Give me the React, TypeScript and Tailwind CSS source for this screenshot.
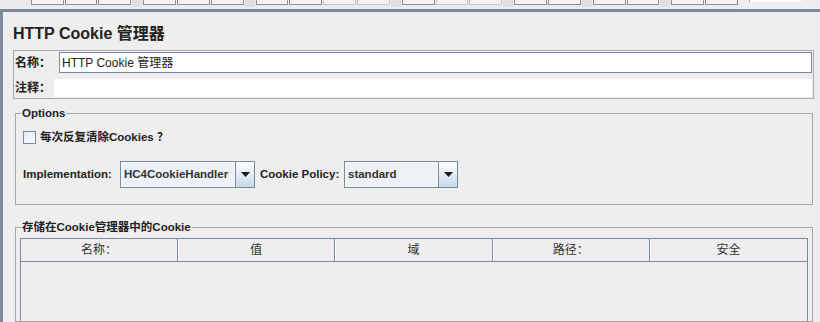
import React from 'react';

const FONT = "font-['Liberation_Sans','Noto_Sans_CJK_SC',sans-serif]";

// toolbar strip: b = active button, d = disabled button, s = separator
const TOOLBAR = 'bbbsbbbsbbddsbddsbbsbbsbb'.split('');

function Toolbar() {
  return (
    <div className="flex h-[9px]">
      <div className="flex h-full w-[739px] bg-[#ebebeb]">
        <div className="w-[31px]" />
        {TOOLBAR.map((t, i) =>
          t === 's' ? (
            <div key={i} className="mr-[1px] h-[7px] w-[10px] bg-[#dedee3]" />
          ) : (
            <div
              key={i}
              className={`mr-[1px] h-[5px] w-[33px] border-x border-b bg-[#f2f2f2] ${
                t === 'b' ? 'border-[#8e8e8e]' : 'border-[#c6c6c6]'
              }`}
            />
          )
        )}
      </div>
      <div className="flex-1 bg-[#eeeeee] pl-[10px]">
        <div className="h-[2px] w-[52px] border-l border-[#a0a0a0] bg-white" />
      </div>
    </div>
  );
}

function Combo({ value, className }: { value: string; className: string }) {
  return (
    <div className={`flex h-[27px] border border-[#7a8a9c] bg-[#eef1f6] ${className}`}>
      <div className="flex flex-1 items-center border border-[#f8faff] pl-[2px] text-[11.5px] font-bold text-[#333]">
        {value}
      </div>
      <div className="flex w-[19px] items-center justify-center border-l border-[#7a8a9c] bg-gradient-to-b from-white to-[#c8d8ec]">
        <svg width="9" height="5" viewBox="0 0 9 5">
          <path d="M0 0h9L4.5 5z" fill="#1a1a1a" />
        </svg>
      </div>
    </div>
  );
}

const COLUMNS = ['名称：', '值', '域', '路径：', '安全'];

export default function App() {
  return (
    <div className={`flex h-[322px] w-[820px] flex-col overflow-hidden bg-[#eeeeee] text-[#333] ${FONT}`}>
      <Toolbar />
      <div className="h-[3px] bg-[#7d8a9b]" />
      <div className="flex flex-1">
        <div className="w-[3px] bg-[#7d8a9b]" />
        <div className="flex flex-1 flex-col">
          <div className="ml-[10px] mt-[12px] h-[20px] text-[16px] font-bold leading-[20px] text-[#222]">
            HTTP Cookie 管理器
          </div>

          {/* name + comment */}
          <div className="ml-[10px] mr-[6px] mt-[6px] border border-[#a8a8a8] p-[1px]">
            <div className="flex h-[21px]">
              <div className="flex w-[44px] items-center text-[12px] font-bold text-[#222]">名称：</div>
              <div className="flex flex-1 items-center border border-[#7b8a9c] bg-white pl-[2px] text-[12px] text-[#222]">
                HTTP Cookie 管理器
              </div>
            </div>
            <div className="mt-[6px] flex h-[18px]">
              <div className="flex w-[39px] items-center text-[12px] font-bold text-[#222]">注释：</div>
              <div className="flex-1 bg-white" />
            </div>
          </div>

          {/* options */}
          <fieldset className="ml-[12px] mr-[7px] mt-[7px] border border-[#a6a6a6] pb-[16px] pl-[7px]">
            <legend className="ml-[-2px] px-[1px] text-[11.5px] font-bold leading-[14px] text-[#222]">Options</legend>
            <div className="mt-[11px] flex h-[13px] items-center">
              <div className="h-[13px] w-[13px] border border-[#7a8a9c] bg-gradient-to-br from-[#dfe8f3] to-white" />
              <span className="ml-[4px] text-[11.5px] font-bold text-[#222]">每次反复清除Cookies ？</span>
            </div>
            <div className="mt-[17px] flex items-center">
              <span className="w-[97px] text-[11.5px] font-bold text-[#222]">Implementation:</span>
              <Combo value="HC4CookieHandler" className="w-[135px]" />
              <span className="ml-[5px] w-[84px] text-[11.5px] font-bold text-[#222]">Cookie Policy:</span>
              <Combo value="standard" className="w-[114px]" />
            </div>
          </fieldset>

          {/* cookie table */}
          <fieldset className="ml-[12px] mr-[7px] mt-[15px] flex flex-1 flex-col border border-[#a6a6a6] px-[4px]">
            <legend className="ml-[1px] px-[1px] text-[11.5px] font-bold leading-[14px] text-[#222]">
              存储在Cookie管理器中的Cookie
            </legend>
            <div className="mt-[4px] flex-1 border-x border-t border-[#7b8a9c]">
              <div className="grid h-[23px] grid-cols-5 border-b border-[#7b8a9c]">
                {COLUMNS.map((c, i) => (
                  <div
                    key={c}
                    className={`flex items-center justify-center text-[12px] text-[#333] ${
                      i < 4 ? 'border-r border-[#7b8a9c]' : ''
                    } ${i > 0 ? 'shadow-[inset_1px_0_0_#fff]' : ''}`}
                  >
                    {c}
                  </div>
                ))}
              </div>
            </div>
          </fieldset>
        </div>
      </div>
    </div>
  );
}
